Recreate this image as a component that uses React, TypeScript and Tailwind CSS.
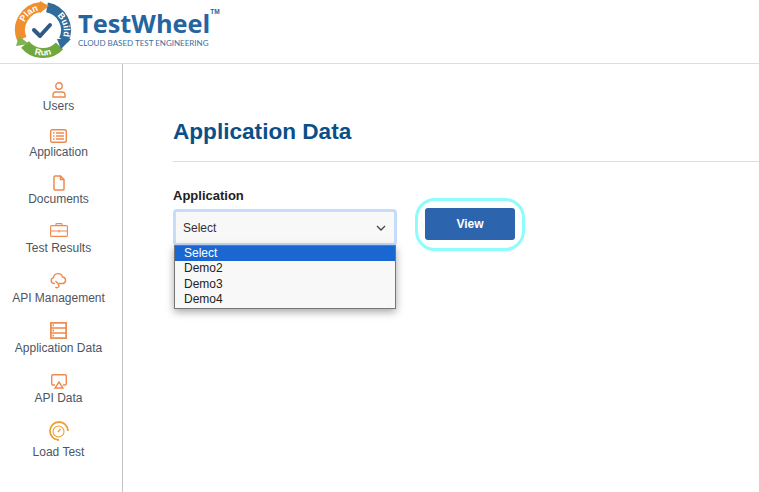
import { ReactNode } from 'react';

const orange = '#ee8a4f';

const Logo = () => (
  <svg width="64" height="60" viewBox="0 0 64 60" className="shrink-0">
    <defs>
      <path id="planArc" d="M12.5 21.4 A 20 20 0 0 1 31 9" fill="none" />
      <path id="buildArc" d="M45 14.8 A 20 20 0 0 1 51.5 33" fill="none" />
      <path id="runArc" d="M20 52 A 25.5 25.5 0 0 0 42 52" fill="none" />
    </defs>
    <path d="M9.8 38 A 23 23 0 0 1 29 6.1" fill="none" stroke="#f08f2e" strokeWidth="10" />
    <path d="M35 6.4 A 23 23 0 0 1 51.7 39" fill="none" stroke="#2f6c9b" strokeWidth="10" />
    <path d="M47.5 45 A 23 23 0 0 1 13 43.5" fill="none" stroke="#6fa83f" strokeWidth="10" />
    <path d="M28 0 L37 5 L28 12 Z" fill="#f08f2e" />
    <path d="M45 38 L59 38 L49 48 Z" fill="#2f6c9b" />
    <path d="M7 35 L4 45 L17 43 Z" fill="#7fb54b" />
    <path d="M22 29 L28 35 L38 24" fill="none" stroke="#2e5a85" strokeWidth="4" strokeLinecap="round" strokeLinejoin="round" />
    <text fontFamily="'Liberation Sans', sans-serif" fontSize="9" fontWeight="700" fill="#fff">
      <textPath href="#planArc">Plan</textPath>
    </text>
    <text fontFamily="'Liberation Sans', sans-serif" fontSize="9" fontWeight="700" fill="#fff">
      <textPath href="#buildArc">Build</textPath>
    </text>
    <text fontFamily="'Liberation Sans', sans-serif" fontSize="9" fontWeight="700" fill="#fff" textAnchor="middle">
      <textPath href="#runArc" startOffset="50%">Run</textPath>
    </text>
  </svg>
);

const IconUsers = () => (
  <svg width="16" height="16" viewBox="0 0 16 16" fill="none" stroke={orange} strokeWidth="1.4">
    <circle cx="8" cy="4" r="3.2" />
    <path d="M2 15 V13 Q2 10 5 10 H11 Q14 10 14 13 V15 Z" />
  </svg>
);

const IconList = () => (
  <svg width="17" height="14" viewBox="0 0 17 14" fill="none" stroke={orange} strokeWidth="1.4">
    <rect x="0.7" y="0.7" width="15.6" height="12.6" rx="1.5" />
    <path d="M3 4H4.5M3 7H4.5M3 10H4.5M6 4H14M6 7H14M6 10H14" />
  </svg>
);

const IconFile = () => (
  <svg width="12" height="16" viewBox="0 0 12 16" fill="none" stroke={orange} strokeWidth="1.5">
    <path d="M1 2 Q1 1 2 1 H7.5 L11 4.5 V14 Q11 15 10 15 H2 Q1 15 1 14 Z" />
    <path d="M7.5 1 V4.5 H11" />
  </svg>
);

const IconBriefcase = () => (
  <svg width="18" height="14" viewBox="0 0 18 14" fill="none" stroke={orange} strokeWidth="1.1">
    <rect x="0.6" y="2.6" width="16.8" height="10.8" rx="1" />
    <path d="M6 2.6 V1.2 Q6 0.6 6.6 0.6 H11.4 Q12 0.6 12 1.2 V2.6 M0.6 8 H17.4 M9 7 V9.5" />
  </svg>
);

const IconCloud = () => (
  <svg width="17" height="17" viewBox="0 0 17 17" fill="none" stroke={orange} strokeWidth="1.4">
    <path d="M5 11.5 H4 A3 3 0 0 1 3.5 5.6 A4.6 4.6 0 0 1 12.5 5 A3.3 3.3 0 0 1 13 11.5 H9" />
    <path d="M5.5 9 L8 11.5 L9 14 A2 2 0 0 1 5.5 15" />
  </svg>
);

const IconServer = () => (
  <svg width="17" height="17" viewBox="0 0 17 17" fill="none" stroke={orange} strokeWidth="1.7">
    <rect x="0.9" y="0.9" width="15.2" height="15.2" />
    <path d="M0.9 6H16.1M0.9 11H16.1" />
    <path d="M2.5 3.4H4M2.5 8.5H4M2.5 13.6H4" strokeWidth="1.8" />
  </svg>
);

const IconAirplay = () => (
  <svg width="16" height="15" viewBox="0 0 16 15" fill="none" stroke={orange} strokeWidth="1.4">
    <path d="M4 11 H2 Q0.7 11 0.7 9.7 V2 Q0.7 0.7 2 0.7 H14 Q15.3 0.7 15.3 2 V9.7 Q15.3 11 14 11 H12" />
    <path d="M8 8 L12 14 H4 Z" />
  </svg>
);

const IconGauge = () => (
  <svg width="20" height="20" viewBox="0 0 20 20" fill="none" stroke="#eb9f35">
    <path d="M19 10 A 9 9 0 1 0 10 19" strokeWidth="1.8" />
    <circle cx="9.5" cy="10.5" r="5.5" strokeWidth="1.1" />
    <path d="M9 11 L11.5 8" strokeWidth="1.3" />
  </svg>
);

type NavItem = { label: string; icon: ReactNode; heightClass: string; iconClass: string };

const navItems: NavItem[] = [
  { label: 'Users', icon: <IconUsers />, heightClass: 'h-[47px]', iconClass: 'h-[16px]' },
  { label: 'Application', icon: <IconList />, heightClass: 'h-[46px]', iconClass: 'h-[15px]' },
  { label: 'Documents', icon: <IconFile />, heightClass: 'h-[48px]', iconClass: 'h-[16px]' },
  { label: 'Test Results', icon: <IconBriefcase />, heightClass: 'h-[49px]', iconClass: 'h-[17px]' },
  { label: 'API Management', icon: <IconCloud />, heightClass: 'h-[50px]', iconClass: 'h-[18px]' },
  { label: 'Application Data', icon: <IconServer />, heightClass: 'h-[52px]', iconClass: 'h-[18px]' },
  { label: 'API Data', icon: <IconAirplay />, heightClass: 'h-[47px]', iconClass: 'h-[16px]' },
  { label: 'Load Test', icon: <IconGauge />, heightClass: 'h-[50px]', iconClass: 'h-[23px]' },
];

const App = () => {
  return (
    <div className="h-[492px] w-[759px] overflow-hidden bg-white font-['Liberation_Sans',sans-serif]">
      <header className="flex h-[64px] items-start border-b border-[#dddddd] pl-[12px] pt-[1px]">
        <Logo />
        <div className="ml-[2px] mt-[7px] flex flex-col">
          <div className="flex items-start">
            <span className="font-['Open_Sans',sans-serif] text-[25.4px] font-bold leading-[30px] text-[#25659f]">
              TestWheel
            </span>
            <span className="mt-[0px] text-[6.5px] font-bold leading-[8px] text-[#25659f]">TM</span>
          </div>
          <span className="font-['Lato',sans-serif] text-[8px] leading-[10px] whitespace-nowrap text-[#3a709f]">
            CLOUD BASED TEST ENGINEERING
          </span>
        </div>
      </header>
      <div className="flex h-[428px]">
        <aside className="w-[123px] shrink-0 border-r border-[#c4c4c4] pr-[5px] pt-[18px]">
          {navItems.map((item) => (
            <div key={item.label} className={`flex flex-col items-center ${item.heightClass}`}>
              <div className={`flex items-start justify-center ${item.iconClass}`}>{item.icon}</div>
              <span className="text-[12px] leading-[16px] whitespace-nowrap text-[#4d5563]">{item.label}</span>
            </div>
          ))}
        </aside>
        <main className="flex-1 pl-[50px] pt-[54px]">
          <h1 className="border-b border-[#dddddd] pb-[15px] text-[22.6px] font-bold leading-[28px] text-[#0b4f88]">
            Application Data
          </h1>
          <div className="mt-[26px] flex items-start">
            <div className="relative w-[224px]">
              <label className="block text-[13px] font-bold leading-[15px] text-[#212121]">Application</label>
              <div className="mt-[6px] flex h-[37px] items-center justify-between rounded-[4px] border-[3px] border-[#c5dcfb] bg-[#f8f8f8] pl-[7px] pr-[8px] text-[12px] text-[#333333]">
                <span>Select</span>
                <svg width="10" height="6" viewBox="0 0 10 6" fill="none" stroke="#444444" strokeWidth="1.3">
                  <path d="M1 1 L5 5 L9 1" />
                </svg>
              </div>
              <ul className="absolute left-[1px] top-[57px] w-[222px] border border-[#767676] bg-[#f8f8f8] text-[12px] leading-[15.4px] text-[#222222] shadow-[0_3px_8px_rgba(0,0,0,0.35)]">
                <li className="bg-[#1a67d2] pl-[9px] text-white">Select</li>
                <li className="pl-[9px]">Demo2</li>
                <li className="pl-[9px]">Demo3</li>
                <li className="pl-[9px]">Demo4</li>
              </ul>
            </div>
            <div className="ml-[18px] mt-[10px] rounded-[20px] border-[3px] border-[#8ffcfc] px-[7px] pb-[8px] pt-[7px]">
              <button className="block h-[32px] w-[90px] rounded-[3px] bg-[#2c65ae] text-[12px] font-bold text-white">
                View
              </button>
            </div>
          </div>
        </main>
      </div>
    </div>
  );
};

export default App;
